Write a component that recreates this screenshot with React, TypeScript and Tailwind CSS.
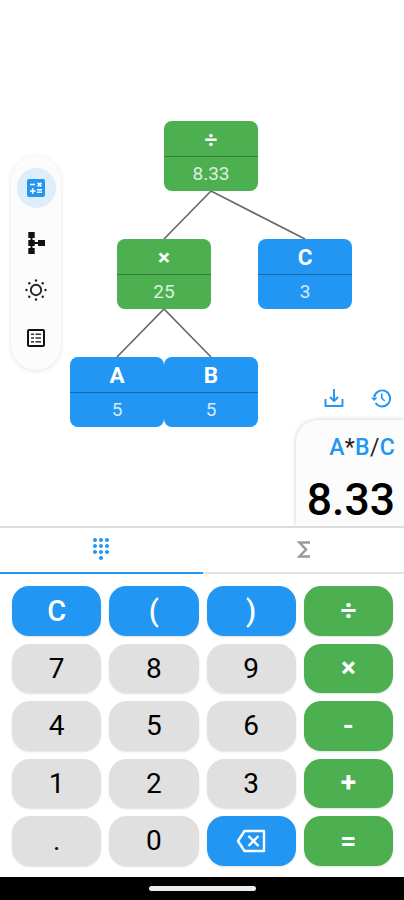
import type { ReactNode } from "react"
import { MdDialpad } from "react-icons/md"

export default function App() {
  return (
    <main className="flex h-[900px] w-[404px] flex-col overflow-hidden bg-white font-['Roboto',sans-serif]">
      <TreeCanvas />
      <KeypadTabs />
      <Keypad />
      <div className="flex h-[23px] justify-center bg-black pt-[9px]">
        <div className="h-[5px] w-[107px] rounded-full bg-[#ececec]" />
      </div>
    </main>
  )
}

function TreeCanvas() {
  return (
    <section className="relative h-[526px] shrink-0 overflow-hidden">
      {/* Expression tree */}
      <svg className="absolute inset-0" width="404" height="526" fill="none" stroke="#6a6a6a" strokeWidth="1.7">
        <path d="M164 239 211 191 305 239" />
        <path d="M117 357 164 309 211 357" />
      </svg>
      <TreeNode position="left-[164px] top-[121px]" color="bg-[#4caf50]" label="÷" value="8.33" />
      <TreeNode position="left-[117px] top-[239px]" color="bg-[#4caf50]" label="×" value="25" />
      <TreeNode position="left-[258px] top-[239px]" color="bg-[#2196f3]" label="C" value="3" />
      <TreeNode position="left-[70px] top-[357px]" color="bg-[#2196f3]" label="A" value="5" />
      <TreeNode position="left-[164px] top-[357px]" color="bg-[#2196f3]" label="B" value="5" />

      {/* Floating toolbar */}
      <nav className="absolute left-[11px] top-[156px] flex h-[214px] w-[50px] flex-col items-center rounded-full bg-[#fcfcfc] pt-[12px] shadow-[0_1px_5px_rgba(0,0,0,0.11)]">
        <button className="flex h-[40px] w-[39px] items-center justify-center rounded-full bg-[#dfecf9]">
          <CalculatorIcon />
        </button>
        <button className="mt-[24px] flex h-[22px] items-center">
          <BranchIcon />
        </button>
        <button className="mt-[24px] flex h-[24px] items-center">
          <SunIcon />
        </button>
        <button className="mt-[26px] flex h-[20px] items-center">
          <TableIcon />
        </button>
      </nav>

      {/* Result panel */}
      <div className="absolute bottom-0 right-0 flex w-[108px] flex-col">
        <div className="flex justify-between pb-[12px] pl-[28px] pr-[13px]">
          <DownloadIcon />
          <HistoryIcon />
        </div>
        <div className="h-[106px] rounded-tl-[22px] bg-[#fcfcfc] pr-[9px] pt-[15px] text-right shadow-[0_0_5px_rgba(0,0,0,0.2)]">
          <p className="text-[23px] font-medium leading-[26px] tracking-[0.3px] text-[#2196f3]">
            A<span className="font-normal text-[#222]">*</span>B<span className="font-normal text-[#222]">/</span>C
          </p>
          <p className="mt-[12px] text-[44.500px] font-medium leading-[54px] text-black">8.33</p>
        </div>
      </div>
    </section>
  )
}

type TreeNodeProps = { position: string; color: string; label: string; value: string }
function TreeNode({ position, color, label, value }: TreeNodeProps) {
  return (
    <div className={`absolute flex h-[70px] w-[94px] flex-col rounded-[8px] text-center text-white ${position} ${color}`}>
      <div className="h-[35.500px] border-b border-black/30 text-[22.500px] font-bold leading-[37px]">{label}</div>
      <div className="text-[19px] leading-[33px] text-white/80">{value}</div>
    </div>
  )
}

function KeypadTabs() {
  return (
    <div className="flex h-[48px] shrink-0 border-t-2 border-[#dcdcdc]">
      <button className="flex w-[203px] justify-center border-b-2 border-[#2196f3] pr-px pt-[9px] text-[#2196f3]">
        <MdDialpad size={24} />
      </button>
      <button className="flex flex-1 justify-center border-b-2 border-[#e2e2e2] pt-[13px]">
        <SigmaIcon />
      </button>
    </div>
  )
}

const keys = ["C", "(", ")", "÷", "7", "8", "9", "×", "4", "5", "6", "-", "1", "2", "3", "+", ".", "0", "⌫", "="]

function Keypad() {
  return (
    <div className="grid h-[303px] shrink-0 grid-cols-4 content-start gap-x-[8px] gap-y-[8px] pl-[12px] pr-[11px] pt-[12px]">
      {keys.map((key) => (
        <Key key={key} name={key} />
      ))}
    </div>
  )
}

function Key({ name }: { name: string }) {
  if ("÷×-+=".includes(name)) {
    return (
      <button className="h-[49.500px] rounded-[17px] bg-[#4caf50] text-[28px] font-bold text-white shadow-[0_1px_2px_rgba(0,0,0,0.12)]">
        {name}
      </button>
    )
  }
  if ("C()⌫".includes(name)) {
    return (
      <button className="flex h-[49.500px] items-center justify-center rounded-[17px] bg-[#2196f3] pt-px text-[29px] font-medium text-white shadow-[0_1px_2px_rgba(0,0,0,0.12)]">
        {name === "⌫" ? <BackspaceIcon /> : name}
      </button>
    )
  }
  return (
    <button className="h-[49.500px] rounded-[18px] bg-[#e0e0e0] pt-px text-[28px] text-black shadow-[0_1px_2px_rgba(0,0,0,0.12)]">
      {name}
    </button>
  )
}

// --- Icons ---
type IconProps = { width: number; height: number; children: ReactNode }
function Icon({ width, height, children }: IconProps) {
  return (
    <svg width={width} height={height} viewBox={`0 0 ${width} ${height}`} fill="none">
      {children}
    </svg>
  )
}

function CalculatorIcon() {
  return (
    <Icon width={18} height={18}>
      <rect width="18" height="18" rx="2" fill="#2196f3" />
      <path d="M3 5.500h5M3 12h5.500M5.700 9.300v5.400M10 10.700h5M10 13.300h5" stroke="#fff" strokeWidth="1.600" />
      <path d="m10.700 3.800 3.600 3.600M14.300 3.800l-3.600 3.600" stroke="#fff" strokeWidth="1.900" />
    </Icon>
  )
}

function BranchIcon() {
  return (
    <Icon width={18} height={22}>
      <path d="M4.500 3v16M4 11h10" stroke="#111" strokeWidth="2" />
      <path d="M1.300 0h6.400v6H1.300zM1.300 8h6.400v6H1.300zM1.300 16h6.400v6H1.300zM11 8h7v6h-7z" fill="#111" />
    </Icon>
  )
}

function SunIcon() {
  return (
    <Icon width={22} height={22}>
      <circle cx="11" cy="11" r="5.200" stroke="#222" strokeWidth="1.900" />
      <g fill="#222">
        <circle cx="11" cy="1.500" r="1.200" />
        <circle cx="11" cy="20.500" r="1.200" />
        <circle cx="1.500" cy="11" r="1.200" />
        <circle cx="20.500" cy="11" r="1.200" />
        <circle cx="4.300" cy="4.300" r="1.200" />
        <circle cx="17.700" cy="17.700" r="1.200" />
        <circle cx="4.300" cy="17.700" r="1.200" />
        <circle cx="17.700" cy="4.300" r="1.200" />
      </g>
    </Icon>
  )
}

function TableIcon() {
  return (
    <Icon width={18} height={18}>
      <rect x="1" y="1" width="16" height="16" rx="1" stroke="#111" strokeWidth="2" />
      <path d="M4 5.200h3M8.500 5.200H14M4 9h3M8.500 9H14M4 12.800h3M8.500 12.800H14" stroke="#333" strokeWidth="1.600" />
    </Icon>
  )
}

function SigmaIcon() {
  return (
    <Icon width={14} height={17}>
      <path d="M13 1.500H2.500L9 8.500l-6.500 7H13" stroke="#9a9a9a" strokeWidth="2.500" />
    </Icon>
  )
}

function DownloadIcon() {
  return (
    <Icon width={20} height={20}>
      <path d="M1.500 11v7h17v-7M10 1v12M6 9l4 4 4-4" stroke="#2196f3" strokeWidth="1.900" strokeLinejoin="round" />
    </Icon>
  )
}

function HistoryIcon() {
  return (
    <Icon width={20} height={20}>
      <path d="M4.500 15a8 8 0 1 0-1.300-6" stroke="#2196f3" strokeWidth="1.900" />
      <path d="M0 9.500h6.500L3.200 13z" fill="#2196f3" />
      <path d="M10.700 5.500V10l3 3" stroke="#2196f3" strokeWidth="1.600" />
    </Icon>
  )
}

function BackspaceIcon() {
  return (
    <Icon width={30} height={24}>
      <path d="M8.500 2H28v20H8.500L2 12zM12.500 7l10 10M22.500 7l-10 10" stroke="#fff" strokeWidth="2.400" strokeLinejoin="round" />
    </Icon>
  )
}
